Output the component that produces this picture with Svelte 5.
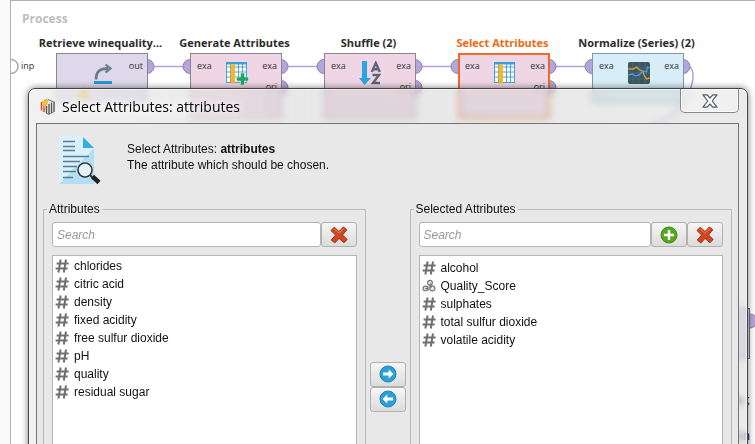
<script>
  const nodes = [
    { x: 56, title: 'Retrieve winequality...', kind: 'source', icon: 'retrieve', left: false, right: 'out' },
    { x: 190, title: 'Generate Attributes', kind: 'blend', icon: 'generate', left: true, right: 'exa', ori: true },
    { x: 324, title: 'Shuffle (2)', kind: 'blend', icon: 'shuffle', left: true, right: 'exa', ori: true },
    { x: 458, title: 'Select Attributes', kind: 'blend', icon: 'select', left: true, right: 'exa', ori: true, active: true },
    { x: 592, title: 'Normalize (Series) (2)', kind: 'series', icon: 'series', left: true, right: 'exa' }
  ];
  const available = ['chlorides', 'citric acid', 'density', 'fixed acidity', 'free sulfur dioxide', 'pH', 'quality', 'residual sugar'];
  const selected = ['alcohol', 'Quality_Score', 'sulphates', 'total sulfur dioxide', 'volatile acidity'];
  let leftQuery = $state('');
  let rightQuery = $state('');
</script>

{#snippet cross()}
  <svg width="18" height="18" viewBox="0 0 18 18" aria-hidden="true">
    <path d="M4.2 1.2 9 5.5 13.4 1l3.4 2.7L12.6 9l4.6 4.4-3.2 3.4L9 12.4 4.8 17l-3.6-3L5.6 9 1 4.6z" fill="#cf4520" stroke="#a8320f" stroke-width="1" stroke-linejoin="round" />
    <path d="M4.3 3 9 7.2 13.5 2.8" fill="none" stroke="#e0694a" stroke-width="1.3" />
  </svg>
{/snippet}

{#snippet arrow(back)}
  <svg width="18" height="18" viewBox="0 0 18 18" aria-hidden="true">
    <circle cx="9" cy="9" r="8" fill="#2a9fd8" stroke="#1c86bd" />
    <path d={back ? 'M3.5 9 8.3 4.6V7.4H14v3.2H8.3v2.8z' : 'M14.5 9 9.7 4.6V7.4H4v3.2h5.7v2.8z'} fill="#fff" />
  </svg>
{/snippet}

{#snippet typeIcon(name)}
  {#if name === 'Quality_Score'}
    <svg width="14" height="14" viewBox="0 0 14 14" fill="#e4e4e4" stroke="#777" stroke-width="1.1" aria-hidden="true">
      <circle cx="8" cy="3.8" r="2.4" /><circle cx="3.4" cy="9.4" r="2.3" /><circle cx="10.4" cy="9.4" r="2.5" />
      <path d="M7.500 5.500 6.500 11.500M9 4v5M3 9.500h2" />
    </svg>
  {:else}
    <svg width="14" height="14" viewBox="0 0 14 14" fill="none" stroke="#707070" stroke-width="2" aria-hidden="true">
      <path d="M5.6.5 3.4 13.5M11 .5 8.8 13.5M1.6 4.6h12M.6 9.4h12" />
    </svg>
  {/if}
{/snippet}

{#snippet nodeIcon(kind)}
  <svg class="glyph" width="24" height="24" viewBox="0 0 24 24" aria-hidden="true">
    {#if kind === 'retrieve'}
      <path d="M5 18.500C5 11 8 7.500 17 7.500" fill="none" stroke="#6d7b8a" stroke-width="2.8" />
      <path d="M14.5 3.500 19.500 7.500 14.5 11.500" fill="none" stroke="#6d7b8a" stroke-width="2.2" />
      <path d="M3 20h18v3H3z" fill="#2499dc" />
    {:else if kind === 'shuffle'}
      <path d="M3 0h5v17h4L5.500 24 0 17h3z" fill="#2ba5e2" />
      <path d="M12.800 11 16.800 2l4 9M14.500 8.200h5M13.500 14h6.500l-6 8h7" fill="none" stroke="#5f6478" stroke-width="2.400" />
    {:else if kind === 'series'}
      <rect x="1" y="1" width="22" height="22" rx="2" fill="#3d5663" />
      <path d="M6 1v22M12 1v22M18 1v22M1 7h22M1 12h22M1 18h22" stroke="#526c79" stroke-width=".7" />
      <path d="M1.500 8h5l3-2 3 3 3 1 2 5 2 3 3-1" fill="none" stroke="#d69c36" stroke-width="1.400" />
      <path d="M1.500 14l4-1 3 2 4-1 3-4 4 1 1-5 2 1" fill="none" stroke="#4c9fd8" stroke-width="1.300" />
    {:else}
      <rect x="1.500" y="1.500" width="20" height="20" fill="#fff" stroke="#4aa3d3" />
      <path d="M2 6h19.500M2 11h19.500M2 16h19.500M5.500 2v20M13.500 2v20M17.500 2v20" stroke="#4aa3d3" />
      <path d="M1 1h21v2.500H1z" fill="#38a0d6" />
      <path d="M5.500 3.500h4.500v19H5.500z" fill="#f5b62c" />
      {#if kind === 'generate'}
        <path d="M15.500 12h4v4h4v4h-4v4h-4v-4h-4v-4h4z" fill="#23a266" stroke="#e6eee9" stroke-width=".6" />
      {/if}
    {/if}
  </svg>
{/snippet}

<main class="workspace">
  <section class="process">
    <h2>Process</h2>
  </section>

  <div class="canvas">
    <svg class="wires" width="1" height="1" aria-hidden="true">
      <g fill="none" stroke="#b3a2d9" stroke-width="1.500">
        <path d="M147 66.500h43M281 66.500h43M415 66.500h43M549 66.500h43M689 66c8 6 3 24-6 38-8 12-20 17-34 22" />
      </g>
      <path d="M11 59.500a7 7 0 0 1 0 14" fill="#fff" stroke="#aaa" stroke-width="1.500" />
      <g fill="#b5a5dc" stroke="#8b86a3">
        {#each nodes as n (n.x)}
          {#if n.left}<circle cx={n.x} cy="66.500" r="7" />{/if}
          <circle cx={n.x + 91} cy="66.500" r="7" />
          {#if n.ori}<circle cx={n.x + 91} cy="87.500" r="7" />{/if}
        {/each}
        <circle cx="750" cy="321" r="7" />
      </g>
    </svg>
    <span class="inlet">inp</span>
    {#each nodes as n (n.x)}
      <article class="node {n.kind}" class:active={n.active} style:left="{n.x}px">
        <h3>{n.title}</h3>
        <div class="body">
          <span class="port">{n.left ? 'exa' : ''}</span>
          {@render nodeIcon(n.icon)}
          <span class="port out">{n.right}{#if n.ori}<span>ori</span>{/if}</span>
          {#if n.kind === 'source'}<i class="warning"></i>{/if}
        </div>
      </article>
    {/each}
    <div class="hidden-node"></div>
    <p class="note">data ;<br />column</p>
  </div>

  <div class="dialog" role="dialog" aria-labelledby="dialog-title">
    <header class="titlebar">
      <svg width="16" height="17" viewBox="0 0 16 17" aria-hidden="true">
        <path d="M8 0 15.500 3.500v9.500L8 17 .5 13V4z" fill="#e6e6e6" />
        <path d="M1.500 4v8.500M4 3.500V14" stroke="#e5412d" stroke-width="1.400" />
        <path d="M2 4 7 1v5L5 8v3" fill="#f8c42c" stroke="#f4a321" />
        <path d="M6.500 8v7.500M9 6v10M11.500 4.500V15M14 4v9.500" stroke="#555" stroke-width="1.300" />
        <path d="m8 1.500 7 3M6.500 15l2 1.500 6.500-3.500" fill="none" stroke="#777" />
      </svg>
      <h1 id="dialog-title">Select Attributes: attributes</h1>
      <button class="close" aria-label="Close">
        <svg width="16" height="14" viewBox="0 0 16 14" aria-hidden="true">
          <path d="M1 .8h4.200L8 4 10.800.8H15L10.200 7l4.800 6.200h-4.200L8 10l-2.800 3.200H1L5.800 7z" fill="#fff" stroke="#555b66" stroke-width="1.200" stroke-linejoin="round" />
        </svg>
      </button>
    </header>

    <div class="content">
      <div class="intro">
        <svg width="44" height="50" viewBox="0 0 44 50" aria-hidden="true">
          <path d="M1 1h24l11 12v36H1z" fill="#d9f1fd" />
          <path d="M36 13v36H1z" fill="#b3dff5" />
          <path d="M25 2v11h11z" fill="#39abdf" />
          <path d="M5 6.500h12M5 11.500h12M5 15.500h12M5 21.500h26M5 26.500h17M5 31.500h14M5 36.500h13M5 42.500h10" stroke="#5d7b91" stroke-width="1.300" />
          <circle cx="27" cy="35" r="7" fill="#e5f3f9" stroke="#383838" stroke-width="1.600" />
          <path d="m32 40 3 3" stroke="#383838" stroke-width="2" />
          <path d="m34.500 41.500 6.500 6" stroke="#222" stroke-width="4.500" />
        </svg>
        <p>Select Attributes: <strong>attributes</strong><br />The attribute which should be chosen.</p>
      </div>

      <div class="picker">
        <fieldset>
          <legend>Attributes</legend>
          <div class="search">
            <input type="text" placeholder="Search" aria-label="Search attributes" bind:value={leftQuery} />
            <button aria-label="Clear search" onclick={() => (leftQuery = '')}>{@render cross()}</button>
          </div>
          <ul>
            {#each available as name}<li>{@render typeIcon(name)}{name}</li>{/each}
          </ul>
        </fieldset>

        <div class="transfer">
          <button aria-label="Add to selection">{@render arrow(false)}</button>
          <button aria-label="Remove from selection">{@render arrow(true)}</button>
        </div>

        <fieldset class="chosen">
          <legend>Selected Attributes</legend>
          <div class="search">
            <input type="text" placeholder="Search" aria-label="Search selected attributes" bind:value={rightQuery} />
            <button aria-label="Add attribute">
              <svg width="18" height="18" viewBox="0 0 18 18" aria-hidden="true">
                <circle cx="9" cy="9" r="8" fill="#56a81f" stroke="#438a16" />
                <path d="M9 4v10M4 9h10" stroke="#fff" stroke-width="2.400" />
              </svg>
            </button>
            <button aria-label="Clear search" onclick={() => (rightQuery = '')}>{@render cross()}</button>
          </div>
          <ul>
            {#each selected as name}<li>{@render typeIcon(name)}{name}</li>{/each}
          </ul>
        </fieldset>
      </div>
    </div>
  </div>
</main>

<style>
  :global(body) { margin: 0; overflow: hidden; }
  * { box-sizing: border-box; }
  h1, h2, h3, p, ul { margin: 0; padding: 0; font-weight: normal; }
  svg { display: block; flex: none; }

  .workspace {
    position: relative;
    height: 100vh;
    padding-left: 10px;
    overflow: hidden;
    background: #fafafa;
    font: 12px/16px "Liberation Sans", Arial, sans-serif;
    color: #111;
  }
  .process {
    height: 100%;
    padding: 9px 11px;
    background: #fff;
    border: solid #b0b0b0;
    border-width: 1px 0 0 1px;
  }
  h2 { font: bold 12px/18px "Open Sans", sans-serif; color: #bdbdbd; }

  .canvas { position: absolute; inset: 0; font: 9px/12px "Open Sans", sans-serif; color: #333; }
  .wires { position: absolute; left: 0; top: 0; overflow: visible; }
  .inlet { position: absolute; left: 21px; top: 60px; }
  .node { position: absolute; top: 35px; width: 92px; }
  .node h3 {
    display: flex;
    justify-content: center;
    height: 18px;
    padding-right: 3px;
    white-space: nowrap;
    font: bold 11px/16px "Open Sans", sans-serif;
    color: #2b2b2b;
  }
  .body {
    display: flex;
    justify-content: space-between;
    height: 66px;
    padding: 6px 4px 0 6px;
    border: 1px solid #8c8591;
    background: #f0d6e5;
  }
  .source .body { height: 50px; background: #ddd8ea; }
  .series .body { height: 50px; background: #d7edf8; border-color: #7f9ba8; }
  .active .body { border: 2px solid #ee6a2c; padding: 5px 3px 0 5px; }
  .node.active h3 { color: #ee6a12; }
  .port { width: 18px; }
  .out { text-align: right; }
  .out span { display: block; margin-top: 9px; }
  .glyph { margin-top: 1px; }
  .warning {
    position: absolute;
    left: 21px;
    top: 52px;
    border: 7px solid transparent;
    border-bottom: 12px solid #f0b820;
    border-top: 0;
  }
  .hidden-node {
    position: absolute;
    left: 658px;
    top: 308px;
    width: 92px;
    height: 51px;
    border: 1px solid #77727f;
    background: #ddd8ea;
  }
  .note {
    position: absolute;
    left: 650px;
    top: 382px;
    width: 100px;
    text-align: right;
    font: 12px/36px "Liberation Sans", Arial, sans-serif;
    color: #111;
  }

  .dialog {
    position: absolute;
    left: 28px;
    right: 7px;
    top: 88px;
    padding: 0 8px 8px 7px;
    border: 1px solid #444;
    border-radius: 7px;
    background: linear-gradient(90deg, #ecececb8, #d0d0d080 42%, #d6d6d680);
    backdrop-filter: blur(3px);
    box-shadow: 0 0 7px #0008, inset 0 0 0 1px #fff8;
  }
  .titlebar { display: flex; align-items: center; height: 34px; padding-left: 4px; }
  h1 {
    flex: 1;
    padding: 1px 0 0 6px;
    font: 14px/20px "Open Sans", sans-serif;
    color: #000;
    text-shadow: 0 0 8px #fff, 0 0 8px #fff;
  }
  .close {
    display: grid;
    place-items: center;
    align-self: flex-start;
    width: 59px;
    height: 24px;
    padding: 0;
    border: 1px solid #888;
    border-top: 0;
    border-radius: 0 0 5px 5px;
    background: #f4f4f499;
    box-shadow: inset 0 0 0 1px #fffa;
  }
  .content { border: 1px solid #747474; background: #e8e8e8; padding: 11px 6px 6px; }
  .intro { display: flex; gap: 25px; height: 66px; padding-left: 15px; }
  .intro p { padding-top: 6px; }

  .picker { display: grid; grid-template-columns: minmax(0, 1fr) 36px minmax(0, 1fr); gap: 4px; }
  fieldset { min-width: 0; margin: 0; padding: 5px 8px 8px; border: 1px solid #bbb; }
  legend { margin-left: -5px; padding: 0 2px; line-height: 16px; }
  .search { display: flex; margin-bottom: 8px; }
  input {
    flex: 1;
    min-width: 0;
    height: 25px;
    padding: 0 4px;
    border: 1px solid #b5b5b5;
    border-radius: 3px;
    background: #fff;
    font: 12px "Liberation Sans", Arial, sans-serif;
  }
  input::placeholder { color: #999; font-style: italic; opacity: 1; }
  .search button, .transfer button {
    display: grid;
    place-items: center;
    width: 36px;
    height: 25px;
    padding: 0;
    border: 1px solid #b0b0b0;
    border-radius: 3px;
    background: linear-gradient(#f6f6f6, #dcdcdc);
  }
  .transfer { display: flex; flex-direction: column; justify-content: center; }
  ul { min-height: 308px; padding: 1px 2px; border: 1px solid #b5b5b5; background: #fff; list-style: none; }
  .chosen ul { padding-top: 3px; }
  li { display: flex; align-items: center; gap: 5px; height: 18px; }
</style>
